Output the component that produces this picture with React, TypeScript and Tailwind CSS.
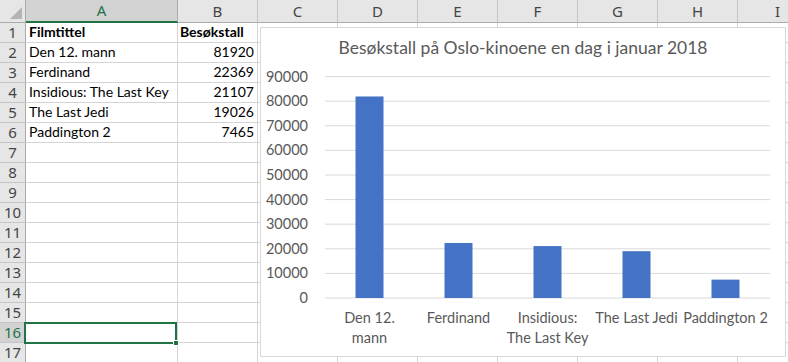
import React from "react";

const data: { a: string; b: string; bold?: boolean; num?: boolean }[] = [
  { a: "Filmtittel", b: "Besøkstall", bold: true },
  { a: "Den 12. mann", b: "81920", num: true },
  { a: "Ferdinand", b: "22369", num: true },
  { a: "Insidious: The Last Key", b: "21107", num: true },
  { a: "The Last Jedi", b: "19026", num: true },
  { a: "Paddington 2", b: "7465", num: true },
];

const letters = ["C", "D", "E", "F", "G", "H", "I"];

const bars = [
  { v: 81920, l1: "Den 12.", l2: "mann" },
  { v: 22369, l1: "Ferdinand" },
  { v: 21107, l1: "Insidious:", l2: "The Last Key" },
  { v: 19026, l1: "The Last Jedi" },
  { v: 7465, l1: "Paddington 2" },
];

function Chart() {
  const y0 = 270;
  const step = 24.6;
  const yOf = (v: number) => y0 - (v / 10000) * step;
  const ticks = [0, 1, 2, 3, 4, 5, 6, 7, 8, 9];
  return (
    <div className="absolute left-[260px] top-[27px] w-[526px] h-[330px] bg-white border border-[#d9d9d9] z-10">
      <svg width="524" height="328" className="block" style={{ fontFamily: "Lato, sans-serif" }}>
        <text x="262" y="26" textAnchor="middle" fill="#595959" fontSize="17.5">
          Besøkstall på Oslo-kinoene en dag i januar 2018
        </text>
        {ticks.map((t) => (
          <g key={t}>
            <line x1="64" x2="509" y1={yOf(t * 10000)} y2={yOf(t * 10000)} stroke="#d9d9d9" strokeWidth="1" />
            <text x="47" y={yOf(t * 10000) + 5} textAnchor="end" fill="#595959" fontSize="14.5">
              {t * 10000}
            </text>
          </g>
        ))}
        {bars.map((b, i) => {
          const cx = 108.5 + 89 * i;
          return (
            <g key={i}>
              <rect x={cx - 14} y={yOf(b.v)} width="28" height={y0 - yOf(b.v)} fill="#4472c4" />
              <text x={cx} y="295" textAnchor="middle" fill="#595959" fontSize="14.5">
                {b.l1}
              </text>
              {b.l2 && (
                <text x={cx} y="315" textAnchor="middle" fill="#595959" fontSize="14.5">
                  {b.l2}
                </text>
              )}
            </g>
          );
        })}
      </svg>
    </div>
  );
}

export default function App() {
  const rows = Array.from({ length: 17 }, (_, i) => i + 1);
  return (
    <div className="relative w-[788px] h-[362px] overflow-hidden bg-white">
      <div className="grid grid-cols-[26px_152px_80px_80px_80px_80px_80px_80px_80px_80px] w-[818px]">
        {/* header row */}
        <div className="h-[23px] bg-[#e6e6e6] border-r border-b border-[#ababab] relative">
          <div className="absolute right-[3px] bottom-[3px] w-0 h-0 border-l-[12px] border-l-transparent border-b-[12px] border-b-[#b4b4b4]" />
        </div>
        <div className="h-[23px] bg-[#d2d2d2] border-r border-[#ababab] border-b-2 border-b-[#217346] flex items-center justify-center text-[15px] text-[#217346] font-['Noto_Sans',sans-serif]">
          A
        </div>
        <div className="h-[23px] bg-[#e6e6e6] border-r border-r-[#c6c6c6] border-b border-b-[#ababab] flex items-center justify-center text-[15px] text-[#444] font-['Noto_Sans',sans-serif]">
          B
        </div>
        {letters.map((l) => (
          <div
            key={l}
            className="h-[23px] bg-[#e6e6e6] border-r border-r-[#c6c6c6] border-b border-b-[#ababab] flex items-center justify-center text-[15px] text-[#444] font-['Noto_Sans',sans-serif]"
          >
            {l}
          </div>
        ))}
        {rows.map((r) => {
          const d = data[r - 1];
          const sel = r === 16;
          return (
            <React.Fragment key={r}>
              <div
                className={
                  sel
                    ? "h-[20px] bg-[#d2d2d2] border-r border-r-[#ababab] border-b border-b-[#c6c6c6] flex items-center justify-center text-[15px] text-[#217346] font-['Noto_Sans',sans-serif]"
                    : "h-[20px] bg-[#e6e6e6] border-r border-r-[#ababab] border-b border-b-[#c6c6c6] flex items-center justify-center text-[15px] text-[#444] font-['Noto_Sans',sans-serif]"
                }
              >
                {r}
              </div>
              <div
                className={
                  "h-[20px] border-r border-b border-[#d4d4d4] flex items-end pl-[3px] pb-[1px] text-[14px] leading-[18px] text-black font-['Lato',sans-serif] whitespace-nowrap relative " +
                  (d?.bold ? "font-bold" : "")
                }
              >
                {d?.a}
                {sel && (
                  <div className="absolute left-[-2px] top-[-1px] w-[153px] h-[22px] border-2 border-[#217346] z-20">
                    <div className="absolute right-[-4px] bottom-[-4px] w-[6px] h-[6px] bg-[#217346] border border-white" />
                  </div>
                )}
              </div>
              <div
                className={
                  "h-[20px] border-r border-b border-[#d4d4d4] flex items-end pb-[1px] pl-[2px] pr-[3px] text-[14px] leading-[18px] text-black font-['Lato',sans-serif] whitespace-nowrap " +
                  (d?.num ? "justify-end " : "") +
                  (d?.bold ? "font-bold" : "")
                }
              >
                {d?.b}
              </div>
              {letters.map((l) => (
                <div key={l} className="h-[20px] border-r border-b border-[#d4d4d4]" />
              ))}
            </React.Fragment>
          );
        })}
      </div>
      <Chart />
    </div>
  );
}
